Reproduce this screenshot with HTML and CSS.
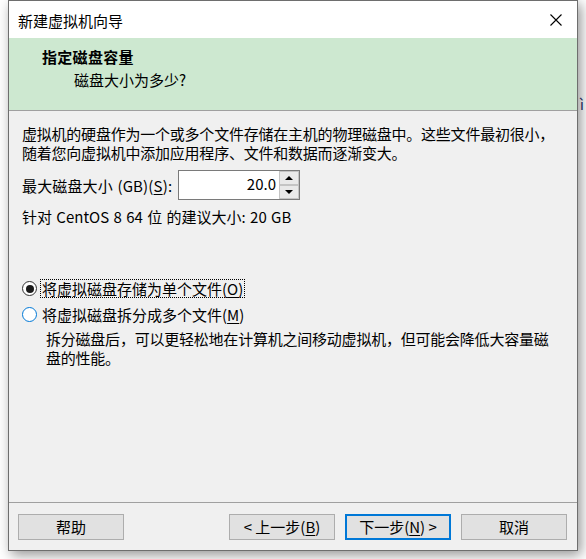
FILE: index.html
```html
<!DOCTYPE html>
<html lang="zh-CN">
<head>
<meta charset="utf-8">
<title>新建虚拟机向导</title>
<link rel="stylesheet" href="styles.css">
</head>
<body>
<div class="stray">ì</div>
<div class="window">
  <div class="titlebar">
    <span class="title">新建虚拟机向导</span>
    <svg class="close" width="12" height="12" viewBox="0 0 12 12"><path d="M0.5 0.5 L11.5 11.5 M11.5 0.5 L0.5 11.5" stroke="#000" stroke-width="1.1" fill="none"/></svg>
  </div>
  <div class="header">
    <div class="h-title">指定磁盘容量</div>
    <div class="h-sub">磁盘大小为多少?</div>
  </div>
  <div class="content">
    <p class="para">虚拟机的硬盘作为一个或多个文件存储在主机的物理磁盘中。这些文件最初很小，<br>随着您向虚拟机中添加应用程序、文件和数据而逐渐变大。</p>
    <div class="size-row">
      <span class="size-label">最大磁盘大小 (GB)(<u>S</u>):</span>
      <div class="spin">
        <div class="spin-value">20.0</div>
        <div class="spin-btns">
          <div class="spin-btn"><span class="arrow-up"></span></div>
          <div class="spin-btn"><span class="arrow-down"></span></div>
        </div>
      </div>
    </div>
    <div class="recommend">针对 CentOS 8 64 位 的建议大小: 20 GB</div>
    <div class="radio-row first">
      <span class="radio checked"></span>
      <span class="radio-label focus">将虚拟磁盘存储为单个文件(<u>O</u>)</span>
    </div>
    <div class="radio-row second">
      <span class="radio hover"></span>
      <span class="radio-label">将虚拟磁盘拆分成多个文件(<u>M</u>)</span>
    </div>
    <p class="desc">拆分磁盘后，可以更轻松地在计算机之间移动虚拟机，但可能会降低大容量磁<br>盘的性能。</p>
  </div>
  <div class="footer">
    <button class="btn">帮助</button>
    <div class="spacer"></div>
    <button class="btn">&lt; 上一步(<u>B</u>)</button>
    <button class="btn default">下一步(<u>N</u>) &gt;</button>
    <button class="btn">取消</button>
  </div>
</div>
</body>
</html>
```

FILE: styles.css
```css
html, body {
  margin: 0;
  padding: 0;
}
body {
  width: 586px;
  height: 559px;
  background: #ffffff;
  font-family: "Noto Sans CJK SC", "Noto Sans", sans-serif;
  font-size: 15px;
  color: #000;
  overflow: hidden;
  position: relative;
}
.stray {
  position: absolute;
  left: 580px;
  top: 94px;
  font-size: 14px;
  color: #1a2a6a;
}
.window {
  margin-left: 8px;
  width: 568px;
  height: 549px;
  border: 1px solid #6e6e6e;
  background: #f0f0f0;
  display: flex;
  flex-direction: column;
  box-shadow: 3px 4px 12px rgba(0, 0, 0, 0.42);
  position: relative;
}
.titlebar {
  height: 37px;
  background: #ffffff;
  display: flex;
  align-items: center;
  padding-left: 9px;
  padding-right: 15px;
  flex-shrink: 0;
}
.title {
  flex: 1;
  line-height: 19px;
  padding-top: 1px;
}
.close {
  display: block;
}
.header {
  background: #cde8d0;
  border-bottom: 1px solid #a0a0a0;
  padding: 9px 0 0 33px;
  box-sizing: border-box;
  flex-shrink: 0;
  height: 73px;
}
.h-title {
  font-weight: bold;
  line-height: 19px;
  letter-spacing: 0.3px;
}
.h-sub {
  line-height: 19px;
  margin-top: 4px;
  padding-left: 32px;
}
.content {
  flex: 1;
  padding: 13px 0 0 13px;
}
.para {
  margin: 0;
  line-height: 19px;
  letter-spacing: -0.22px;
}
.size-row {
  display: flex;
  align-items: center;
  margin-top: 8px;
  height: 30px;
}
.size-label {
  line-height: 19px;
  width: 156px;
  word-spacing: 1px;
  letter-spacing: 0.15px;
}
.spin {
  display: flex;
  border: 1px solid #7a7a7a;
  height: 28px;
  width: 120px;
  background: #fff;
}
.spin-value {
  width: 97px;
  text-align: right;
  line-height: 26px;
  padding-right: 3px;
  font-size: 15px;
}
.spin-btns {
  width: 20px;
  display: flex;
  flex-direction: column;
}
.spin-btn {
  flex: 1;
  background: #e9e9e9;
  border: 1px solid #c4c4c4;
  display: flex;
  align-items: center;
  justify-content: center;
}
.arrow-up {
  width: 0;
  height: 0;
  border-left: 4px solid transparent;
  border-right: 4px solid transparent;
  border-bottom: 4px solid #000;
}
.arrow-down {
  width: 0;
  height: 0;
  border-left: 4px solid transparent;
  border-right: 4px solid transparent;
  border-top: 4px solid #000;
}
.recommend {
  margin-top: 7px;
  line-height: 19px;
  word-spacing: 1px;
}
.radio-row {
  display: flex;
  align-items: center;
  height: 19px;
}
.radio-row.first {
  margin-top: 53px;
}
.radio-row.second {
  margin-top: 7px;
}
.radio {
  width: 13px;
  height: 13px;
  border: 1px solid #333;
  border-radius: 50%;
  background: #fff;
  display: flex;
  align-items: center;
  justify-content: center;
  margin-right: 3px;
  flex-shrink: 0;
}
.radio.checked::after {
  content: "";
  width: 8px;
  height: 8px;
  border-radius: 50%;
  background: #1a1a1a;
}
.radio.hover {
  border-color: #0078d7;
}
.radio-label {
  line-height: 17px;
  padding: 0 1px;
  margin-left: 1px;
}
.radio-label.focus {
  outline: 1px dotted #000;
}
.desc {
  margin: 5px 0 0 24px;
  line-height: 19px;
  letter-spacing: -0.22px;
}
.footer {
  border-top: 1px solid #a0a0a0;
  display: flex;
  align-items: flex-start;
  padding: 11px 10px 0 9px;
  gap: 10px;
  box-sizing: border-box;
  flex-shrink: 0;
  height: 48px;
}
.spacer {
  flex: 1;
}
.btn {
  width: 106px;
  height: 26px;
  background: #e1e1e1;
  border: 1px solid #adadad;
  font-family: "Noto Sans CJK SC", "Noto Sans", sans-serif;
  font-size: 15px;
  color: #000;
  padding: 0;
  line-height: 22px;
}
.btn.default {
  border: 2px solid #0078d7;
}
u {
  text-decoration: underline;
  text-underline-offset: 2px;
}
```
